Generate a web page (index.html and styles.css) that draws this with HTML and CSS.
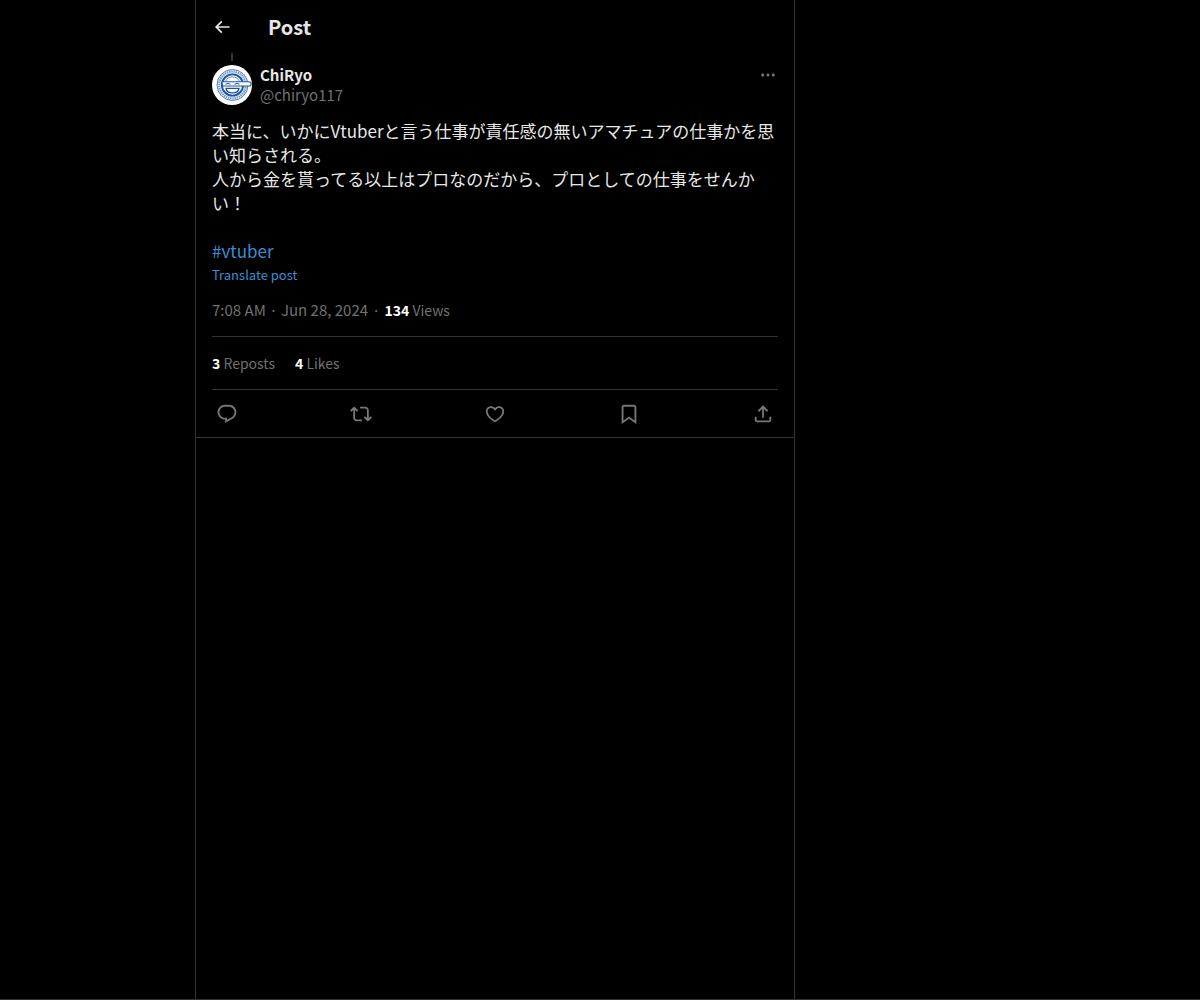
FILE: index.html
```html
<!DOCTYPE html>
<html lang="en">
<head>
    <meta charset="UTF-8">
    <meta name="viewport" content="width=device-width, initial-scale=1.0">
    <title>Post</title>
    <link rel="stylesheet" href="styles.css">
</head>
<body>
    <main class="column">
        <!-- Top bar -->
        <header class="top-bar">
            <button type="button" class="icon-button back-button" aria-label="Back">
                <svg viewBox="0 0 24 24"><path d="M7.414 13l5.043 5.04-1.414 1.42L3.586 12l7.457-7.46 1.414 1.42L7.414 11H21v2H7.414z"/></svg>
            </button>
            <h1>Post</h1>
        </header>

        <article class="post">
            <div class="thread-line"></div>

            <!-- Author -->
            <div class="author">
                <svg class="avatar" viewBox="0 0 40 40" aria-hidden="true">
                    <circle cx="20" cy="20" r="20" fill="#fff"/>
                    <circle cx="20.5" cy="20" r="15.5" fill="#e3ecf6" stroke="#3f74b4" stroke-width=".9"/>
                    <circle cx="20.5" cy="20" r="13.4" fill="none" stroke="#6f98c9" stroke-width="2" stroke-dasharray="1.3 .9"/>
                    <circle cx="20.5" cy="20" r="10.6" fill="#fff" stroke="#1f559f" stroke-width="1.9"/>
                    <path d="M13.5 16.5a7.6 7.6 0 0 1 14 0" fill="none" stroke="#5f8cc2" stroke-width="1"/>
                    <path d="M10 16.8h27a2 2 0 0 1 0 4.200H10.500z" fill="#fff" stroke="#1f559f" stroke-width="1.1"/>
                    <path d="M13.500 19.300q2.500-2 5 0M22.500 19.300q2.500-2 5 0" fill="none" stroke="#1f559f" stroke-width="1"/>
                    <path d="M14 23.300h13c-1 6.200-12 6.200-13 0z" fill="#fff" stroke="#1f559f" stroke-width="1.3"/>
                </svg>
                <div class="author-names">
                    <a href="#" class="name">ChiRyo</a>
                    <a href="#" class="handle">@chiryo117</a>
                </div>
                <button type="button" class="icon-button more-button" aria-label="More">
                    <svg viewBox="0 0 24 24"><path d="M3 12c0-1.100.9-2 2-2s2 .9 2 2-.9 2-2 2-2-.9-2-2zm9 2c1.100 0 2-.9 2-2s-.9-2-2-2-2 .9-2 2 .9 2 2 2zm7 0c1.100 0 2-.9 2-2s-.9-2-2-2-2 .9-2 2 .9 2 2 2z"/></svg>
                </button>
            </div>

            <!-- Text -->
            <div class="post-text" lang="ja">
                <p>本当に、いかにVtuberと言う仕事が責任感の無いアマチュアの仕事かを思い知らされる。<br>人から金を貰ってる以上はプロなのだから、プロとしての仕事をせんかい！</p>
                <p><a href="#">#vtuber</a></p>
            </div>
            <button type="button" class="translate">Translate post</button>

            <div class="meta">
                <a href="#"><time datetime="2024-06-28T07:08">7:08 AM · Jun 28, 2024</time></a>
                <span>·</span>
                <a href="#" class="count"><strong>134</strong> Views</a>
            </div>

            <div class="stats">
                <a href="#" class="count"><strong>3</strong> Reposts</a>
                <a href="#" class="count"><strong>4</strong> Likes</a>
            </div>

            <!-- Actions -->
            <div class="actions">
                <button type="button" class="icon-button" aria-label="Reply">
                    <svg viewBox="0 0 24 24"><path d="M1.751 10c0-4.420 3.584-8 8.005-8h4.366c4.490 0 8.129 3.640 8.129 8.130 0 2.960-1.607 5.680-4.196 7.110l-8.054 4.460v-3.690h-.067c-4.490.1-8.183-3.510-8.183-8.010zm8.005-6c-3.317 0-6.005 2.690-6.005 6 0 3.370 2.770 6.080 6.138 6.010l.351-.010h1.761v2.300l5.087-2.810c1.951-1.080 3.163-3.130 3.163-5.360 0-3.390-2.744-6.130-6.129-6.130H9.756z"/></svg>
                </button>
                <button type="button" class="icon-button" aria-label="Repost">
                    <svg viewBox="0 0 24 24"><path d="M4.5 3.88l4.432 4.14-1.364 1.46L5.5 7.55V16c0 1.1.896 2 2 2H13v2H7.5c-2.209 0-4-1.79-4-4V7.55L1.432 9.48.068 8.02 4.5 3.88zM16.5 6H11V4h5.5c2.209 0 4 1.79 4 4v8.45l2.068-1.93 1.364 1.46-4.432 4.14-4.432-4.14 1.364-1.46 2.068 1.93V8c0-1.1-.896-2-2-2z"/></svg>
                </button>
                <button type="button" class="icon-button" aria-label="Like">
                    <svg viewBox="0 0 24 24"><path d="M16.697 5.5c-1.222-.06-2.679.51-3.89 2.16l-.805 1.09-.806-1.09C9.984 6.01 8.526 5.44 7.304 5.5c-1.243.07-2.349.78-2.91 1.91-.552 1.12-.633 2.78.479 4.82 1.074 1.97 3.257 4.27 7.129 6.61 3.87-2.34 6.052-4.64 7.126-6.61 1.111-2.04 1.03-3.7.477-4.82-.561-1.13-1.666-1.84-2.908-1.91zm4.187 7.69c-1.351 2.48-4.001 5.12-8.379 7.67l-.503.3-.504-.3c-4.379-2.55-7.029-5.19-8.382-7.67-1.36-2.5-1.41-4.86-.514-6.67.887-1.79 2.647-2.91 4.601-3.01 1.651-.09 3.368.56 4.798 2.01 1.429-1.45 3.146-2.1 4.796-2.01 1.954.1 3.714 1.22 4.601 3.01.896 1.81.846 4.17-.514 6.67z"/></svg>
                </button>
                <button type="button" class="icon-button" aria-label="Bookmark">
                    <svg viewBox="0 0 24 24"><path d="M4 4.5C4 3.12 5.119 2 6.5 2h11C18.881 2 20 3.12 20 4.5v18.44l-8-5.71-8 5.71V4.5zM6.5 4c-.276 0-.5.22-.5.5v14.56l6-4.29 6 4.29V4.5c0-.28-.224-.5-.5-.5h-11z"/></svg>
                </button>
                <button type="button" class="icon-button" aria-label="Share">
                    <svg viewBox="0 0 24 24"><path d="M12 2.59l5.7 5.7-1.41 1.42L13 6.41V16h-2V6.41l-3.3 3.3-1.41-1.42L12 2.59zM21 15l-.02 3.51c0 1.38-1.12 2.49-2.5 2.49H5.5C4.11 21 3 19.88 3 18.5V15h2v3.5c0 .28.22.5.5.5h12.98c.28 0 .5-.22.5-.5L19 15h2z"/></svg>
                </button>
            </div>
        </article>
    </main>
</body>
</html>
```

FILE: styles.css
```css
* {
    box-sizing: border-box;
}

body {
    display: flex;
    min-height: 100vh;
    margin: 0;
    padding-left: 195px;
    border-bottom: 1px solid #333;
    background-color: #000;
    color: #e7e7e7;
    font-family: "Noto Sans CJK JP", "Noto Sans", sans-serif;
    font-size: 15px;
    line-height: 20px;
}

h1, p {
    margin: 0;
}

a {
    color: inherit;
    text-decoration: none;
}

button {
    padding: 0;
    border: none;
    background: none;
    color: inherit;
    font-family: inherit;
    cursor: pointer;
}

strong {
    color: #fff;
}

.column {
    flex: 1;
    max-width: 600px;
    border-left: 1px solid #333;
    border-right: 1px solid #333;
}

/* Top bar */
.top-bar {
    display: flex;
    align-items: center;
    gap: 36px;
    height: 53px;
    padding: 0 16px;
}

h1 {
    font-size: 20px;
    line-height: 24px;
}

.icon-button {
    display: flex;
    padding: 4px;
    color: #777;
}

.icon-button svg {
    width: 22px;
    height: 22px;
    fill: currentColor;
}

.back-button {
    padding: 0;
    color: #e7e7e7;
}

.back-button svg {
    width: 20px;
    height: 20px;
}

/* Post */
.post {
    padding: 0 16px;
    border-bottom: 1px solid #333;
}

.thread-line {
    width: 2px;
    height: 8px;
    margin: 0 0 4px 19px;
    background-color: #333;
}

.author {
    display: flex;
    align-items: flex-start;
    gap: 8px;
}

.avatar {
    width: 40px;
    height: 40px;
}

.author-names {
    display: flex;
    flex: 1;
    flex-direction: column;
}

.name {
    font-weight: bold;
}

.handle {
    color: #717171;
}

.more-button {
    padding: 1px;
}

.more-button svg {
    width: 18px;
    height: 18px;
}

.post-text {
    display: grid;
    gap: 24px;
    margin-top: 14px;
    font-size: 17px;
    line-height: 24px;
}

.post-text a,
.translate {
    color: #3b8fd4;
}

.translate {
    display: block;
    margin-top: 3px;
    font-size: 13px;
    line-height: 18px;
}

.meta {
    display: flex;
    gap: 4px;
    padding: 16px 0;
    color: #717171;
}

.count {
    font-size: 14px;
}

.stats {
    display: flex;
    gap: 20px;
    padding: 16px 0;
    border-top: 1px solid #333;
    border-bottom: 1px solid #333;
    color: #717171;
}

.actions {
    display: flex;
    align-items: center;
    justify-content: space-between;
    height: 47px;
}
```
